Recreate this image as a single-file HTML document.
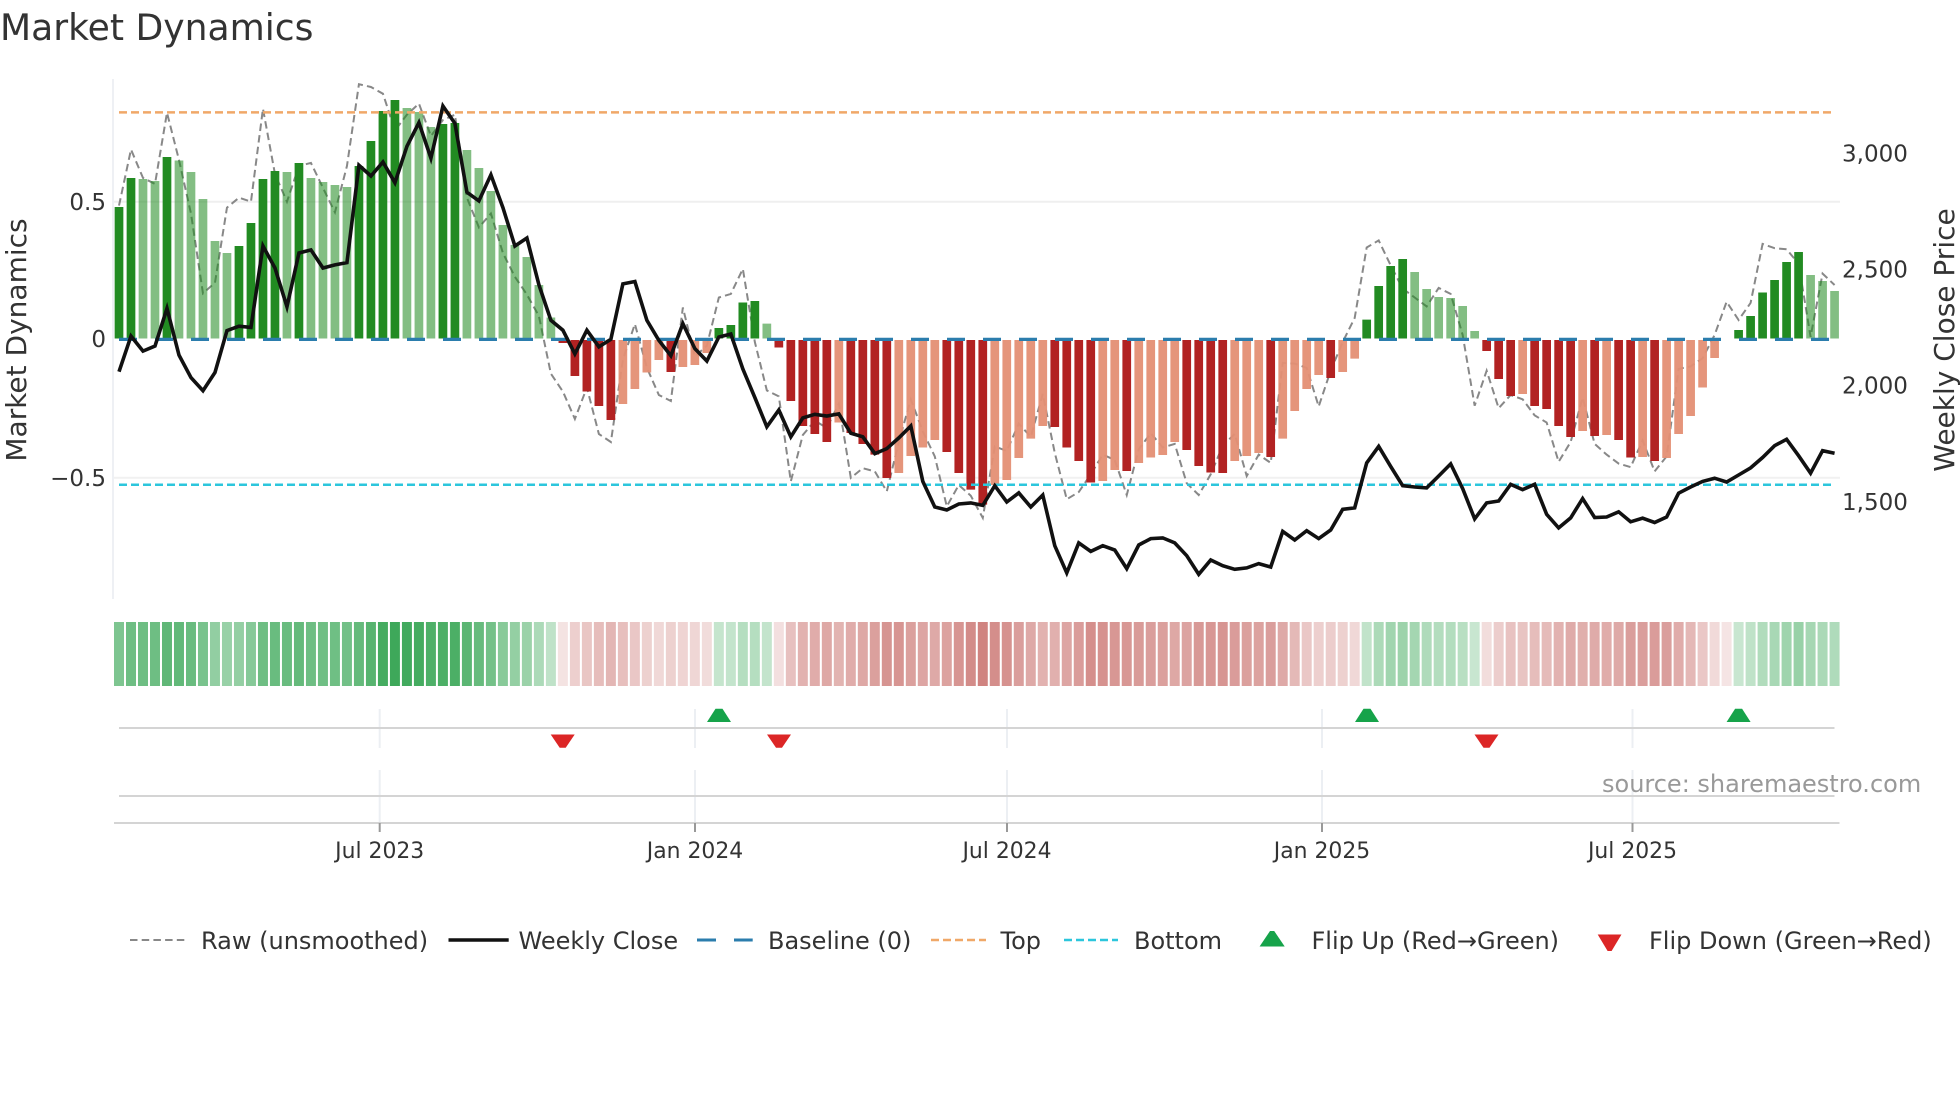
<!DOCTYPE html>
<html><head><meta charset="utf-8"><title>Market Dynamics</title>
<style>
html,body{margin:0;padding:0;background:#fff}
svg{display:block}
text{font-family:"DejaVu Sans","Liberation Sans",sans-serif;fill:#333}
.s path,.s polyline{vector-effect:non-scaling-stroke;fill:none}
</style></head><body>
<svg width="1960" height="1102" viewBox="0 0 1960 1102">
<rect width="1960" height="1102" fill="#fff"/>
<text x="0" y="40" font-size="36.1">Market Dynamics</text>
<line x1="113" y1="79" x2="113" y2="599" stroke="#eef0f4" stroke-width="2"/>
<line x1="114" y1="201.7" x2="1840" y2="201.7" stroke="#efefef" stroke-width="2"/>
<line x1="114" y1="477.7" x2="1840" y2="477.7" stroke="#f1f1f1" stroke-width="2"/>
<g class="s" transform="translate(119 0) scale(11.997 1)">
<polyline stroke="#888" stroke-width="2" stroke-dasharray="7.5 4.2" points="0,205.6 1,149.5 2,177.9 3,183.9 4,112.7 5,160 6,213.5 7,293.4 8,282.7 9,207.6 10,197.7 11,201.7 12,108.7 13,174 14,201.7 15,166 16,162.9 17,187.8 18,212.3 19,166 20,84.2 21,87 22,93.7 23,130.5 24,114.7 25,103.6 26,136 27,120 28,114.7 29,197.7 30,227.4 31,213.5 32,253 33,276.8 34,294.6 35,316 36,373.7 37,391.5 38,419 39,387.5 40,434 41,442 42,359.8 43,324 44,367.7 45,395 46,401 47,307.5 48,356.4 49,345.7 50,297.5 51,293.9 52,268.9 53,342 54,390.4 55,396.4 56,481.4 57,435 58,420.7 59,427.9 60,403.6 61,477.9 62,468.2 63,471.4 64,491.4 65,442 66,399.3 67,431.4 68,456.4 69,506.4 70,485 71,495.7 72,517.9 73,446.4 74,451 75,423.6 76,436.8 77,393.9 78,452.9 79,499.3 80,492 81,474.3 82,454.6 83,460 84,495 85,449.3 86,433.2 87,447.5 88,443.9 89,483.2 90,495 91,474.3 92,445.7 93,433.9 94,476 95,454.6 96,462.9 97,362.9 98,363.6 99,367.9 100,406.4 101,370.7 102,342 103,317.9 104,247.5 105,240.4 106,265.4 107,288.6 108,297.5 109,306.4 110,287.9 111,293.9 112,335 113,405.7 114,370.7 115,408.2 116,395 117,399.3 118,415.4 119,422.5 120,461.8 121,442 122,397.5 123,443.9 124,454.6 125,463.6 126,467.1 127,440.4 128,471.4 129,456.4 130,368.9 131,366.4 132,358.2 133,335 134,301.8 135,320 136,302.9 137,243.9 138,248.2 139,249.3 140,263.6 141,336.8 142,273.6 143,285"/>
<path stroke="#228b22" stroke-width="8.7" d="M0 338.5V207M1 338.5V178M4 338.5V157M10 338.5V246M11 338.5V223M12 338.5V179M13 338.5V171M15 338.5V163M20 338.5V166M21 338.5V141M22 338.5V111M23 338.5V100M27 338.5V124M28 338.5V123M50 338.5V328M51 338.5V325M52 338.5V302.5M53 338.5V301M104 338.5V319.6M105 338.5V286M106 338.5V266M107 338.5V259M135 338.5V330M136 338.5V316M137 338.5V292.5M138 338.5V280M139 338.5V262M140 338.5V252"/>
<path stroke="#228b22" stroke-opacity=".56" stroke-width="8.7" d="M2 338.5V179M3 338.5V181M5 338.5V160.5M6 338.5V172M7 338.5V199M8 338.5V241M9 338.5V253M14 338.5V172M16 338.5V178M17 338.5V182M18 338.5V185M19 338.5V187M24 338.5V108M25 338.5V112M26 338.5V127M29 338.5V150M30 338.5V168M31 338.5V191M32 338.5V225M33 338.5V245M34 338.5V257M35 338.5V285M36 338.5V317.5M54 338.5V323.6M108 338.5V272M109 338.5V289M110 338.5V297M111 338.5V298M112 338.5V306M113 338.5V331M141 338.5V275M142 338.5V281M143 338.5V291"/>
<path stroke="#b22222" stroke-width="8.7" d="M37 340V343M38 340V376M39 340V391.5M40 340V406M41 340V420M46 340V372M55 340V347.5M56 340V401M57 340V426M58 340V434M59 340V442M61 340V433M62 340V444M63 340V454.6M64 340V478M69 340V452M70 340V473M71 340V489.6M72 340V504.6M78 340V427M79 340V447.5M80 340V461M81 340V482.5M84 340V471M89 340V450M90 340V466M91 340V472.5M92 340V473M96 340V457M101 340V378M114 340V351M115 340V379M116 340V396M118 340V406M119 340V409M120 340V426M121 340V437M123 340V436M125 340V440M126 340V457.5M128 340V461"/>
<path stroke="#e48f74" stroke-opacity=".95" stroke-width="8.7" d="M42 340V404M43 340V389M44 340V372.5M45 340V360M47 340V367M48 340V365M49 340V353M60 340V422.5M65 340V473M66 340V456M67 340V447.5M68 340V440M73 340V485M74 340V480M75 340V458M76 340V438.6M77 340V426M82 340V481M83 340V470M85 340V463M86 340V457.5M87 340V455M88 340V442M93 340V461M94 340V456M95 340V453M97 340V438.6M98 340V411M99 340V389M100 340V375M102 340V372M103 340V358.6M117 340V394M122 340V431M124 340V435M127 340V457M129 340V458M130 340V434M131 340V416M132 340V387.5M133 340V358"/>
<g stroke-width="10">
<g stroke="#1d9a3e">
<path opacity=".57" d="M0 622V686"/><path opacity=".64" d="M1 622V686"/><path opacity=".64" d="M2 622V686"/><path opacity=".64" d="M3 622V686"/><path opacity=".7" d="M4 622V686"/><path opacity=".69" d="M5 622V686"/><path opacity=".66" d="M6 622V686"/><path opacity=".59" d="M7 622V686"/><path opacity=".48" d="M8 622V686"/><path opacity=".45" d="M9 622V686"/><path opacity=".47" d="M10 622V686"/><path opacity=".53" d="M11 622V686"/><path opacity=".64" d="M12 622V686"/><path opacity=".66" d="M13 622V686"/><path opacity=".66" d="M14 622V686"/><path opacity=".68" d="M15 622V686"/><path opacity=".64" d="M16 622V686"/><path opacity=".63" d="M17 622V686"/><path opacity=".63" d="M18 622V686"/><path opacity=".62" d="M19 622V686"/><path opacity=".68" d="M20 622V686"/><path opacity=".74" d="M21 622V686"/><path opacity=".82" d="M22 622V686"/><path opacity=".85" d="M23 622V686"/><path opacity=".83" d="M24 622V686"/><path opacity=".82" d="M25 622V686"/><path opacity=".78" d="M26 622V686"/><path opacity=".79" d="M27 622V686"/><path opacity=".79" d="M28 622V686"/><path opacity=".72" d="M29 622V686"/><path opacity=".67" d="M30 622V686"/><path opacity=".61" d="M31 622V686"/><path opacity=".52" d="M32 622V686"/><path opacity=".47" d="M33 622V686"/><path opacity=".44" d="M34 622V686"/><path opacity=".36" d="M35 622V686"/><path opacity=".28" d="M36 622V686"/>
<path opacity=".25" d="M50 622V686"/><path opacity=".26" d="M51 622V686"/><path opacity=".32" d="M52 622V686"/><path opacity=".32" d="M53 622V686"/><path opacity=".26" d="M54 622V686"/>
<path opacity=".27" d="M104 622V686"/><path opacity=".36" d="M105 622V686"/><path opacity=".41" d="M106 622V686"/><path opacity=".43" d="M107 622V686"/><path opacity=".4" d="M108 622V686"/><path opacity=".35" d="M109 622V686"/><path opacity=".33" d="M110 622V686"/><path opacity=".33" d="M111 622V686"/><path opacity=".31" d="M112 622V686"/><path opacity=".24" d="M113 622V686"/>
<path opacity=".24" d="M135 622V686"/><path opacity=".28" d="M136 622V686"/><path opacity=".34" d="M137 622V686"/><path opacity=".38" d="M138 622V686"/><path opacity=".42" d="M139 622V686"/><path opacity=".45" d="M140 622V686"/><path opacity=".39" d="M141 622V686"/><path opacity=".37" d="M142 622V686"/><path opacity=".35" d="M143 622V686"/>
</g>
<g stroke="#bb4a45">
<path opacity=".15" d="M37 622V686"/><path opacity=".26" d="M38 622V686"/><path opacity=".31" d="M39 622V686"/><path opacity=".36" d="M40 622V686"/><path opacity=".4" d="M41 622V686"/><path opacity=".35" d="M42 622V686"/><path opacity=".3" d="M43 622V686"/><path opacity=".25" d="M44 622V686"/><path opacity=".21" d="M45 622V686"/><path opacity=".25" d="M46 622V686"/><path opacity=".23" d="M47 622V686"/><path opacity=".22" d="M48 622V686"/><path opacity=".19" d="M49 622V686"/>
<path opacity=".17" d="M55 622V686"/><path opacity=".34" d="M56 622V686"/><path opacity=".42" d="M57 622V686"/><path opacity=".45" d="M58 622V686"/><path opacity=".48" d="M59 622V686"/><path opacity=".41" d="M60 622V686"/><path opacity=".45" d="M61 622V686"/><path opacity=".48" d="M62 622V686"/><path opacity=".52" d="M63 622V686"/><path opacity=".59" d="M64 622V686"/><path opacity=".58" d="M65 622V686"/><path opacity=".52" d="M66 622V686"/><path opacity=".49" d="M67 622V686"/><path opacity=".47" d="M68 622V686"/><path opacity=".51" d="M69 622V686"/><path opacity=".58" d="M70 622V686"/><path opacity=".63" d="M71 622V686"/><path opacity=".68" d="M72 622V686"/><path opacity=".62" d="M73 622V686"/><path opacity=".6" d="M74 622V686"/><path opacity=".53" d="M75 622V686"/><path opacity=".47" d="M76 622V686"/><path opacity=".42" d="M77 622V686"/><path opacity=".43" d="M78 622V686"/><path opacity=".49" d="M79 622V686"/><path opacity=".54" d="M80 622V686"/><path opacity=".61" d="M81 622V686"/><path opacity=".6" d="M82 622V686"/><path opacity=".57" d="M83 622V686"/><path opacity=".57" d="M84 622V686"/><path opacity=".55" d="M85 622V686"/><path opacity=".53" d="M86 622V686"/><path opacity=".52" d="M87 622V686"/><path opacity=".48" d="M88 622V686"/><path opacity=".5" d="M89 622V686"/><path opacity=".56" d="M90 622V686"/><path opacity=".57" d="M91 622V686"/><path opacity=".58" d="M92 622V686"/><path opacity=".54" d="M93 622V686"/><path opacity=".52" d="M94 622V686"/><path opacity=".51" d="M95 622V686"/><path opacity=".53" d="M96 622V686"/><path opacity=".47" d="M97 622V686"/><path opacity=".38" d="M98 622V686"/><path opacity=".3" d="M99 622V686"/><path opacity=".26" d="M100 622V686"/><path opacity=".27" d="M101 622V686"/><path opacity=".25" d="M102 622V686"/><path opacity=".21" d="M103 622V686"/>
<path opacity=".18" d="M114 622V686"/><path opacity=".27" d="M115 622V686"/><path opacity=".33" d="M116 622V686"/><path opacity=".32" d="M117 622V686"/><path opacity=".36" d="M118 622V686"/><path opacity=".37" d="M119 622V686"/><path opacity=".42" d="M120 622V686"/><path opacity=".46" d="M121 622V686"/><path opacity=".44" d="M122 622V686"/><path opacity=".46" d="M123 622V686"/><path opacity=".45" d="M124 622V686"/><path opacity=".47" d="M125 622V686"/><path opacity=".53" d="M126 622V686"/><path opacity=".53" d="M127 622V686"/><path opacity=".54" d="M128 622V686"/><path opacity=".53" d="M129 622V686"/><path opacity=".45" d="M130 622V686"/><path opacity=".39" d="M131 622V686"/><path opacity=".3" d="M132 622V686"/><path opacity=".2" d="M133 622V686"/><path opacity=".14" d="M134 622V686"/>
</g>
</g>
</g>
<line x1="119" y1="339.4" x2="1834" y2="339.4" stroke="#2b7dad" stroke-width="3.2" stroke-dasharray="18 18"/>
<line x1="119" y1="112.4" x2="1834" y2="112.4" stroke="#f0a868" stroke-width="2.5" stroke-dasharray="8 4"/>
<line x1="119" y1="484.8" x2="1834" y2="484.8" stroke="#2cc6dc" stroke-width="2.5" stroke-dasharray="8 4"/>
<g class="s" transform="translate(119 0) scale(11.997 1)">
<polyline stroke="#111" stroke-width="3.6" stroke-linejoin="miter" points="0,371.7 1,336.1 2,351.1 3,346 4,308.4 5,355.1 6,377.6 7,390.7 8,372.5 9,330.6 10,326.2 11,327.4 12,246 13,268 14,306.8 15,253 16,249.9 17,268 18,264.9 19,262.6 20,165.3 21,176 22,162 23,182.7 24,146.3 25,122.6 26,158.2 27,106 28,123.4 29,192.2 30,200.9 31,174.8 32,207.6 33,246 34,238 35,284.7 36,320.3 37,330.2 38,353.9 39,330.2 40,346.8 41,339.3 42,283.9 43,281.5 44,320.3 45,340.4 46,355.7 47,323.6 48,348.6 49,361 50,337 51,334 52,369 53,397.5 54,426.8 55,410 56,436.8 57,417.9 58,414.3 59,416 60,413.9 61,433.2 62,436.8 63,453.6 64,448.6 65,437.9 66,426 67,481.4 68,507 69,510 70,504 71,502.9 72,505.4 73,485.7 74,502 75,492.9 76,507 77,495 78,545.7 79,572.9 80,542.9 81,551.4 82,545.7 83,550 84,568.6 85,545 86,538.6 87,537.9 88,542.9 89,555.7 90,574.3 91,560 92,565.7 93,569.3 94,567.9 95,563.6 96,567 97,531.4 98,540 99,530.7 100,538.6 101,530 102,509.3 103,507.9 104,462.9 105,446.4 106,466.4 107,485.7 108,487 109,487.9 110,476 111,463.9 112,488.6 113,518.9 114,502.9 115,501 116,484.3 117,489.6 118,484.3 119,514.3 120,527.9 121,517.9 122,498.6 123,517.5 124,517 125,511.8 126,521.8 127,518.2 128,522.5 129,517 130,493.2 131,487 132,481.4 133,478.2 134,482 135,475 136,467.9 137,457.5 138,445.7 139,439.3 140,455.7 141,473.2 142,450.7 143,453.2"/>
</g>
<g font-size="23" text-anchor="end">
<text x="106" y="210">0.5</text>
<text x="106" y="347">0</text>
<text x="106" y="486">−0.5</text>
</g>
<g font-size="23">
<text x="1842" y="161.5">3,000</text>
<text x="1842" y="277.5">2,500</text>
<text x="1842" y="393.5">2,000</text>
<text x="1842" y="510">1,500</text>
</g>
<text font-size="28" text-anchor="middle" transform="translate(26 340) rotate(-90)">Market Dynamics</text>
<text font-size="28" text-anchor="middle" transform="translate(1954 340) rotate(-90)">Weekly Close Price</text>
<g stroke="#eceff3" stroke-width="2">
<path d="M379.7 709V748M379.7 770V823M695 709V748M695 770V823M1007 709V748M1007 770V823M1322 709V748M1322 770V823M1632.5 709V748M1632.5 770V823"/>
</g>
<g stroke="#d4d4d4" stroke-width="2">
<line x1="119" y1="728" x2="1834.5" y2="728"/>
<line x1="119" y1="796" x2="1834.5" y2="796"/>
<line x1="114" y1="823" x2="1839.5" y2="823"/>
</g>
<path d="M379.7 823V832M695 823V832M1007 823V832M1322 823V832M1632.5 823V832" stroke="#999" stroke-width="2"/>
<g fill="#16a34a">
<polygon points="707,722 731,722 722.5,708.7 715.5,708.7"/>
<polygon points="1355,722 1379,722 1370.5,708.7 1363.5,708.7"/>
<polygon points="1726.6,722 1750.6,722 1742.1,708.7 1735.1,708.7"/>
<polygon points="1259.6,946.5 1284.7,946.5 1274.2,931 1270,931"/>
</g>
<g fill="#dc2626">
<polygon points="550.7,734.5 574.7,734.5 565.7,747.7 559.7,747.7"/>
<polygon points="767,734.5 791,734.5 782,747.7 776,747.7"/>
<polygon points="1474.5,734.5 1498.5,734.5 1489.5,747.7 1483.5,747.7"/>
<polygon points="1597.7,934.5 1621.5,934.5 1611.6,951 1607.6,951"/>
</g>
<g font-size="21.9" text-anchor="middle">
<text x="379.7" y="858">Jul 2023</text>
<text x="695" y="858">Jan 2024</text>
<text x="1007" y="858">Jul 2024</text>
<text x="1322" y="858">Jan 2025</text>
<text x="1632.5" y="858">Jul 2025</text>
</g>
<text x="1602" y="792" font-size="24" style="fill:#999">source: sharemaestro.com</text>
<line x1="130" y1="940" x2="186" y2="940" stroke="#888" stroke-width="2" stroke-dasharray="7.5 4.2"/>
<line x1="448.5" y1="940" x2="508.7" y2="940" stroke="#111" stroke-width="3.6"/>
<path d="M697 940H716M734 940H752.7" stroke="#2b7dad" stroke-width="3"/>
<line x1="931" y1="940" x2="986" y2="940" stroke="#f0a868" stroke-width="2.5" stroke-dasharray="8 4"/>
<line x1="1064" y1="940" x2="1118" y2="940" stroke="#2cc6dc" stroke-width="2.5" stroke-dasharray="8 4"/>
<g font-size="24">
<text x="201" y="949">Raw (unsmoothed)</text>
<text x="518.5" y="949">Weekly Close</text>
<text x="768" y="949">Baseline (0)</text>
<text x="1000.5" y="949">Top</text>
<text x="1134" y="949">Bottom</text>
<text x="1311.5" y="949">Flip Up (Red→Green)</text>
<text x="1649" y="949">Flip Down (Green→Red)</text>
</g>
</svg>
</body></html>
